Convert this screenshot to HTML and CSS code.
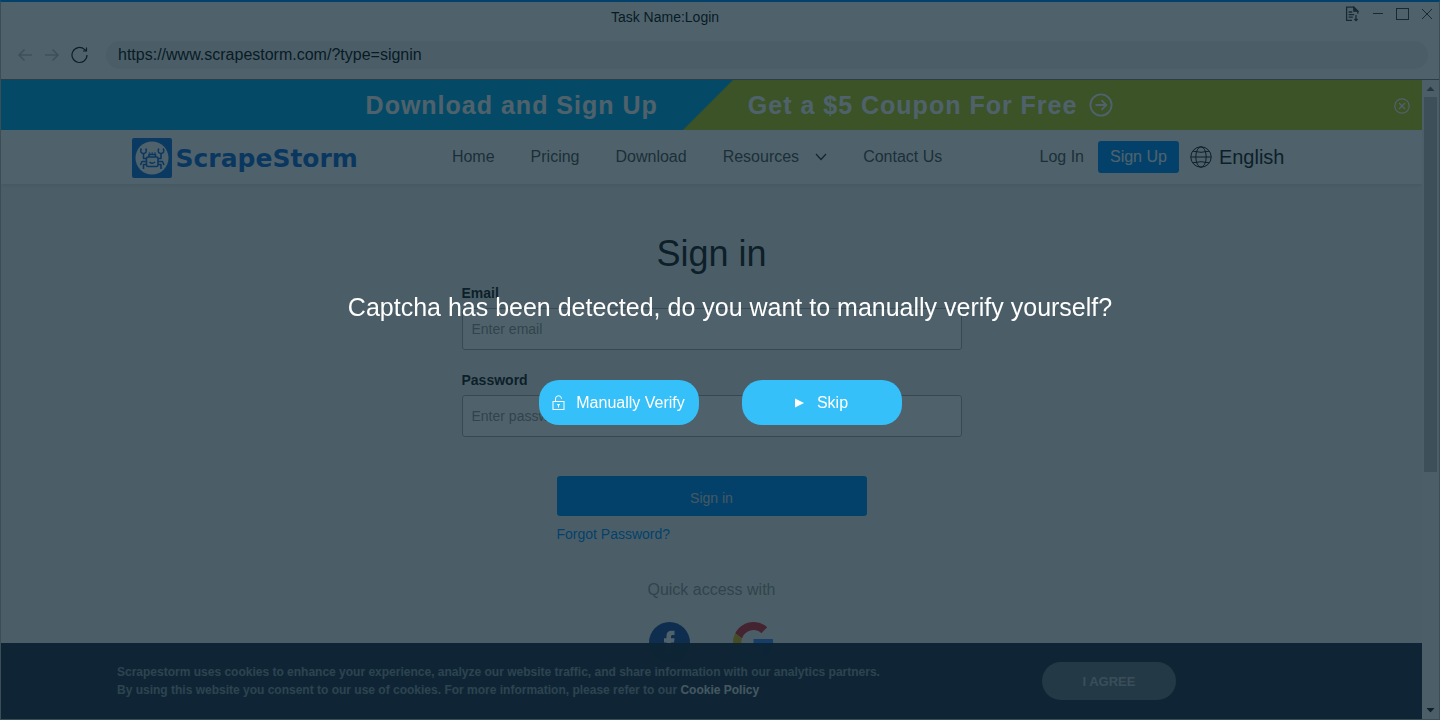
FILE: index.html
```html
<!DOCTYPE html>
<html lang="en">
<head>
    <meta charset="UTF-8">
    <meta name="viewport" content="width=device-width, initial-scale=1.0">
    <title>Task Name:Login</title>
    <link rel="stylesheet" href="styles.css">
</head>
<body>
    <div class="window">
        <header class="titlebar">
            <div class="task-name">Task Name:Login</div>
            <div class="window-controls">
                <button type="button" aria-label="Log">
                    <svg width="15" height="16" viewBox="0 0 15 16" fill="none" stroke="#444" stroke-width="1.3">
                        <path d="M7 14.4H1.600V1.200h7.200l4 4v2.600M3.600 6h3.600M3.600 8.600h5.500M3.600 11.200h4.200"/>
                        <path fill="#444" d="M8.800 1.200v4h4z"/>
                        <path d="M11 9v5.400M9.400 13l1.600 1.600 1.600-1.600"/>
                    </svg>
                </button>
                <button type="button" aria-label="Minimize">
                    <svg width="12" height="16" viewBox="0 0 12 16" stroke="#444"><path d="M1 7.500h10"/></svg>
                </button>
                <button type="button" aria-label="Maximize">
                    <svg width="13" height="16" viewBox="0 0 13 16" fill="none" stroke="#444"><rect x=".5" y="2.500" width="12" height="11"/></svg>
                </button>
                <button type="button" aria-label="Close">
                    <svg width="12" height="16" viewBox="0 0 12 16" stroke="#444"><path d="M1 3l10 10M11 3L1 13"/></svg>
                </button>
            </div>
        </header>

        <div class="toolbar">
            <button type="button" aria-label="Back" disabled>
                <svg width="16" height="16" viewBox="0 0 16 16" fill="none" stroke="#c4c4c4" stroke-width="1.600"><path d="M15 8H2M7.500 2.500L2 8l5.500 5.500"/></svg>
            </button>
            <button type="button" aria-label="Forward" disabled>
                <svg width="16" height="16" viewBox="0 0 16 16" fill="none" stroke="#c4c4c4" stroke-width="1.600"><path d="M1 8h13M8.500 2.500L14 8l-5.500 5.500"/></svg>
            </button>
            <button type="button" aria-label="Reload">
                <svg width="18" height="18" viewBox="0 0 18 18" fill="none" stroke="#222" stroke-width="1.200"><path d="M16 9A7.500 7.500 0 1 1 13.500 3.400l1.500 1.300M15.500 1.500v3.500H12"/></svg>
            </button>
            <input class="address" type="text" aria-label="Address" value="https://www.scrapestorm.com/?type=signin">
        </div>

        <div class="browser">
            <div class="page">
                <div class="banner">
                    <span>Download and Sign Up</span>
                    <a class="coupon" href="#">Get a $5 Coupon For Free
                        <svg width="24" height="24" viewBox="0 0 24 24" fill="none" stroke="#fff" stroke-width="1.800"><circle cx="12" cy="12" r="10.600"/><path d="M6.500 12h10.500M12.500 7.200l4.800 4.800-4.800 4.800"/></svg>
                    </a>
                    <button class="banner-close" type="button" aria-label="Close banner">
                        <svg width="16" height="16" viewBox="0 0 16 16" fill="none" stroke="#fff" stroke-width="1.200"><circle cx="8" cy="8" r="7.200"/><path d="M5 5l6 6M11 5l-6 6"/></svg>
                    </button>
                </div>

                <nav class="navbar">
                    <div class="nav-inner">
                        <a class="logo" href="#">
                            <svg width="40" height="40" viewBox="0 0 40 40">
                                <rect width="40" height="40" rx="2" fill="#1a78e0"/>
                                <circle cx="20" cy="20" r="16.500" fill="#fff"/>
                                <g fill="none" stroke="#1a6fd8" stroke-width="1.600" stroke-linejoin="round">
                                    <rect x="14.500" y="19" width="11.500" height="9.500" rx="1.500"/>
                                    <path d="M17 19v-2.500h6.500V19M17.500 24q2.700 2.500 5.500 0M17.500 15.500v-1M20.300 15.500v-1M23 15.500v-1"/>
                                    <path d="M14.500 20.500h-3V16M26 20.500h3V16"/>
                                    <path d="M9.300 10.500c-1.600 3 0 5 2.200 5s3.800-2 2.200-5M26.800 10.500c-1.600 3 0 5 2.200 5s3.800-2 2.200-5"/>
                                    <path d="M14.500 23.500H10L8.500 27M26 23.500h4.500L32 27M14.500 26.500h-3V31M26 26.500h3V31"/>
                                </g>
                            </svg>
                            <span>ScrapeStorm</span>
                        </a>
                        <div class="nav-links">
                            <a href="#">Home</a>
                            <a href="#">Pricing</a>
                            <a href="#">Download</a>
                            <a class="has-menu" href="#">Resources
                                <svg width="12" height="8" viewBox="0 0 12 8" fill="none" stroke="#333" stroke-width="1.200"><path d="M1 1l5 5.500L11 1"/></svg>
                            </a>
                            <a href="#">Contact Us</a>
                        </div>
                        <div class="nav-account">
                            <a href="#">Log In</a>
                            <a class="sign-up" href="#">Sign Up</a>
                            <button class="language" type="button">
                                <svg width="22" height="22" viewBox="0 0 22 22" fill="none" stroke="#222"><circle cx="11" cy="11" r="10.200"/><ellipse cx="11" cy="11" rx="5.200" ry="10.200"/><path d="M.8 11h20.400M3 5.200q8 2.200 16 0M3 16.800q8-2.200 16 0"/></svg>
                                English
                            </button>
                        </div>
                    </div>
                </nav>

                <main class="content">
                    <h1>Sign in</h1>
                    <form class="login-form">
                        <div class="field">
                            <label for="email">Email</label>
                            <input type="email" id="email" placeholder="Enter email">
                        </div>
                        <div class="field">
                            <label for="password">Password</label>
                            <input type="password" id="password" placeholder="Enter password">
                        </div>
                        <div class="form-actions">
                            <button type="submit">Sign in</button>
                            <a href="#">Forgot Password?</a>
                        </div>
                    </form>
                    <p class="quick">Quick access with</p>
                    <div class="social">
                        <a href="#" aria-label="Facebook">
                            <svg width="41" height="41" viewBox="0 0 41 41"><circle cx="20.500" cy="20.500" r="20.500" fill="#2a4f9f"/><path fill="#fff" d="M17.500 32V20.500H15v-4.200h2.500v-2.200c0-3.600 2-5.400 5.300-5.400h2.700v4.200h-1.700c-1.300 0-1.800.6-1.800 1.800v1.600h3.500l-.5 4.200H22V32z"/></svg>
                        </a>
                        <a href="#" aria-label="Google">
                            <svg width="41" height="41" viewBox="0 0 48 48">
                                <path fill="#d9303c" d="M24 9.500c3.540 0 6.710 1.220 9.210 3.600l6.850-6.850C35.900 2.380 30.470 0 24 0 14.620 0 6.510 5.380 2.560 13.220l7.980 6.190C12.430 13.720 17.740 9.500 24 9.500z"/>
                                <path fill="#4285f4" d="M46.980 24.550c0-1.570-.15-3.090-.38-4.550H24v9.020h12.940c-.58 2.960-2.260 5.480-4.780 7.180l7.730 6c4.510-4.180 7.090-10.360 7.090-17.650z"/>
                                <path fill="#e0b818" d="M10.530 28.590A14.500 14.500 0 0 1 9.770 24c0-1.600.27-3.140.76-4.590l-7.980-6.190A24 24 0 0 0 0 24c0 3.880.92 7.540 2.560 10.780z"/>
                                <path fill="#34a853" d="M24 48c6.480 0 11.930-2.130 15.890-5.810l-7.730-6c-2.150 1.450-4.920 2.300-8.160 2.300-6.260 0-11.570-4.220-13.470-9.910l-7.980 6.190C6.510 42.620 14.620 48 24 48z"/>
                            </svg>
                        </a>
                    </div>
                </main>

                <div class="cookie-bar">
                    <p>Scrapestorm uses cookies to enhance your experience, analyze our website traffic, and share information with our analytics partners.<br>
                    By using this website you consent to our use of cookies. For more information, please refer to our <a href="#">Cookie Policy</a></p>
                    <button type="button">I AGREE</button>
                </div>
            </div>

            <div class="scrollbar">
                <svg width="17" height="17" viewBox="0 0 17 17"><path fill="#707070" d="M4.500 11l4-4.500 4 4.500z"/></svg>
                <div class="track"><div class="thumb"></div></div>
                <svg width="17" height="17" viewBox="0 0 17 17"><path fill="#222" d="M4.500 6l4 4.500 4-4.500z"/></svg>
            </div>
        </div>

        <div class="overlay" role="dialog" aria-labelledby="captcha-text">
            <p id="captcha-text">Captcha has been detected, do you want to manually verify yourself?</p>
            <div class="overlay-buttons">
                <button type="button">
                    <svg width="13" height="16" viewBox="0 0 13 16" fill="none" stroke="#fff"><rect x="1" y="6.500" width="11" height="8"/><path d="M3.500 6.500V4a3 3 0 0 1 6-.5V4M6.500 10v2.500"/><path d="M4.800 9h3.400L6.500 11.500z" fill="#fff" stroke="none"/></svg>
                    Manually Verify
                </button>
                <button class="skip" type="button">
                    <svg width="9" height="10" viewBox="0 0 9 10"><path fill="#fff" d="M0 .5l9 4.500-9 4.500z"/></svg>
                    Skip
                </button>
            </div>
        </div>
    </div>
</body>
</html>
```
FILE: styles.css
```css
* {
    box-sizing: border-box;
}
body {
    margin: 0;
    font-family: "Liberation Sans", Arial, sans-serif;
    font-size: 16px;
    color: #555;
}
a {
    color: inherit;
    text-decoration: none;
}
button {
    padding: 0;
    border: none;
    background: none;
    font-family: inherit;
    font-size: 16px;
    color: inherit;
    cursor: pointer;
}
svg {
    display: block;
    flex-shrink: 0;
}
h1, p {
    margin: 0;
}
.window {
    display: flex;
    flex-direction: column;
    height: 100vh;
    overflow: hidden;
    background: #fff;
    border: 1px solid #bbb;
    border-top: 2px solid #0091ff;
}

/* window chrome */
.titlebar {
    display: flex;
    height: 30px;
}
.task-name {
    flex: 1;
    text-align: center;
    font-size: 14px;
    line-height: 30px;
    color: #111;
}
.window-controls {
    display: flex;
    align-items: flex-start;
    gap: 12px;
    padding: 4px 6px 0 16px;
}
.toolbar {
    display: flex;
    align-items: center;
    gap: 11px;
    height: 48px;
    padding: 0 11px 2px 16px;
    border-bottom: 1px solid #888;
}
.address {
    flex: 1;
    height: 28px;
    margin-left: 6px;
    padding: 0 12px;
    border: none;
    border-radius: 14px;
    background: #f0f0f0;
    font-family: inherit;
    font-size: 16px;
    color: #111;
}
.browser {
    flex: 1;
    display: flex;
    min-height: 0;
}
.page {
    position: relative;
    flex: 1;
    overflow: hidden;
    background: #f2f2f2;
}

/* site header */
.banner {
    position: relative;
    display: flex;
    align-items: center;
    justify-content: center;
    gap: 90px;
    height: 50px;
    padding-left: 56px;
    background: linear-gradient(135deg, #04aef0 calc(50% - 3px), #bccb1c calc(50% - 2px));
    color: #fff;
    font-size: 25px;
    font-weight: bold;
    letter-spacing: 1px;
}
.coupon {
    display: flex;
    align-items: center;
    gap: 12px;
}
.banner-close {
    position: absolute;
    top: 18px;
    right: 12px;
}
.navbar {
    background: #fff;
    box-shadow: 0 1px 4px rgba(0, 0, 0, 0.1);
}
.nav-inner {
    display: flex;
    align-items: center;
    max-width: 1160px;
    height: 54px;
    margin: 0 auto;
    padding-right: 7px;
}
.logo {
    display: flex;
    align-items: center;
    gap: 4px;
    margin-top: 2px;
    font-family: "DejaVu Sans", sans-serif;
    font-size: 25px;
    font-weight: bold;
    color: #1a6fd8;
}
.nav-links {
    display: flex;
    align-items: center;
    gap: 36px;
    margin-left: 94px;
}
.has-menu {
    display: flex;
    align-items: center;
    gap: 16px;
}
.nav-account {
    display: flex;
    align-items: center;
    margin-left: auto;
}
.sign-up {
    margin: 0 11px 0 14px;
    padding: 0 12px;
    border-radius: 3px;
    background: #0091ff;
    color: #fff;
    line-height: 32px;
}
.language {
    display: flex;
    align-items: center;
    gap: 7px;
    font-size: 20px;
    color: #222;
}

/* sign in form */
.content {
    display: flex;
    flex-direction: column;
    align-items: center;
    padding-top: 49px;
}
.content h1 {
    margin-bottom: 8px;
    font-size: 36px;
    font-weight: normal;
    line-height: 42px;
    color: #222;
}
.login-form {
    width: 500px;
    font-size: 14px;
}
.field {
    margin-bottom: 20px;
}
.field label {
    display: block;
    margin-bottom: 5px;
    font-weight: bold;
    line-height: 20px;
    color: #222;
}
.field input {
    width: 100%;
    height: 42px;
    padding: 0 9px;
    border: 1px solid #aaa;
    border-radius: 3px;
    background: #fff;
    font-family: inherit;
    font-size: 14px;
}
.field input::placeholder {
    color: #999;
}
.form-actions {
    display: flex;
    flex-direction: column;
    align-items: flex-start;
    gap: 10px;
    width: 310px;
    margin: 39px auto 0;
}
.form-actions button {
    width: 100%;
    padding-top: 4px;
    border-radius: 3px;
    background: #0091ff;
    color: #ddd;
    font-size: 14px;
    line-height: 36px;
}
.form-actions a {
    color: #0091ff;
}
.quick {
    margin: 39px 0 23px;
    color: #999;
}
.social {
    display: flex;
    gap: 43px;
}

.cookie-bar {
    position: absolute;
    left: 0;
    right: 0;
    bottom: 0;
    display: flex;
    align-items: center;
    gap: 162px;
    height: 76px;
    padding: 0 116px;
    background: rgba(34, 46, 72, 0.97);
    color: #8d99a2;
    font-size: 12px;
    font-weight: bold;
    line-height: 18px;
}
.cookie-bar a {
    color: #ddd;
}
.cookie-bar button {
    width: 134px;
    height: 38px;
    border-radius: 19px;
    background: #6b7680;
    color: #b4bcc4;
    font-size: 13px;
    font-weight: bold;
}

.scrollbar {
    display: flex;
    flex-direction: column;
    width: 17px;
    background: #f4f4f4;
}
.track {
    flex: 1;
    padding: 0 2px;
}
.thumb {
    height: 62%;
    background: #c1c1c1;
}

/* captcha prompt */
.overlay {
    position: fixed;
    inset: 0;
    display: flex;
    flex-direction: column;
    align-items: center;
    justify-content: center;
    gap: 58px;
    padding-bottom: 3px;
    background: rgba(4, 31, 44, 0.7);
    color: #fff;
}
.overlay p {
    padding-left: 20px;
    font-size: 25px;
    line-height: 30px;
}
.overlay-buttons {
    display: flex;
    gap: 43px;
}
.overlay-buttons button {
    display: flex;
    align-items: center;
    justify-content: center;
    gap: 11px;
    width: 160px;
    height: 45px;
    border-radius: 20px;
    background: #35c0fa;
}
.overlay-buttons .skip {
    gap: 13px;
}
```
